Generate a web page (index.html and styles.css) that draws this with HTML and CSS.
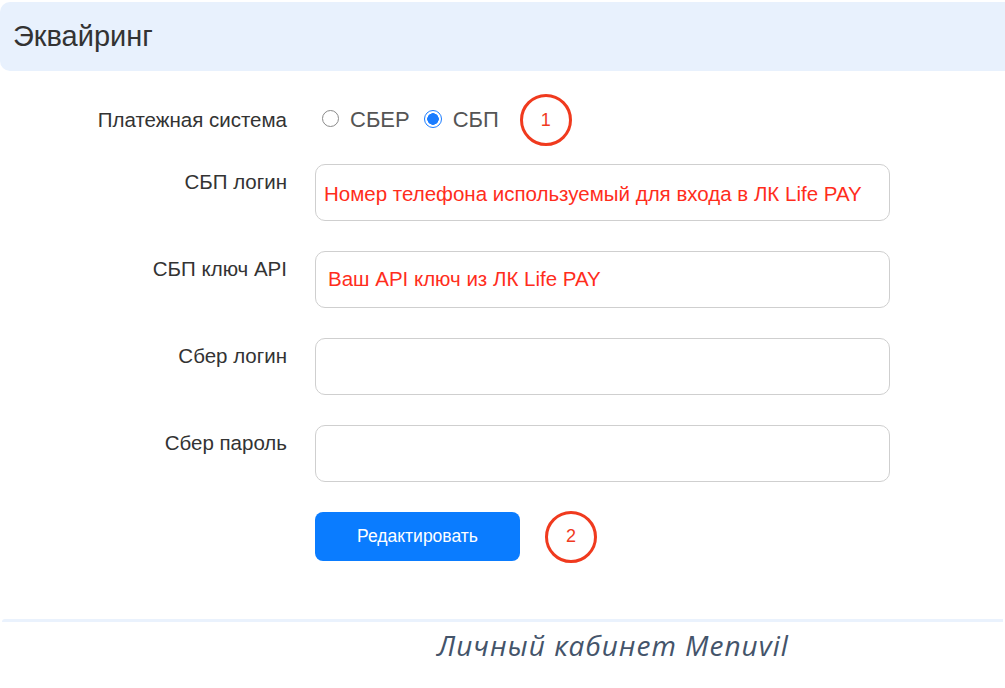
FILE: index.html
```html
<!DOCTYPE html>
<html lang="ru">
<head>
    <meta charset="UTF-8">
    <meta name="viewport" content="width=device-width, initial-scale=1.0">
    <title>Эквайринг</title>
    <link rel="stylesheet" href="styles.css">
</head>
<body>
    <header class="card-head">
        <h2>Эквайринг</h2>
    </header>
    <main class="form">
        <div class="row row-pay">
            <label class="label">Платежная система</label>
            <div class="field">
                <span class="radio"></span><span class="radio-text">СБЕР</span>
                <span class="radio checked"></span><span class="radio-text">СБП</span>
                <span class="mark mark-one">1</span>
            </div>
        </div>
        <div class="row">
            <label class="label">СБП логин</label>
            <div class="input"><span class="hint">Номер телефона используемый для входа в ЛК Life PAY</span></div>
        </div>
        <div class="row">
            <label class="label">СБП ключ API</label>
            <div class="input"><span class="hint hint-up">Ваш API ключ из ЛК Life PAY</span></div>
        </div>
        <div class="row">
            <label class="label">Сбер логин</label>
            <div class="input"></div>
        </div>
        <div class="row">
            <label class="label">Сбер пароль</label>
            <div class="input"></div>
        </div>
        <div class="row row-btn">
            <span></span>
            <div class="field">
                <button class="btn">Редактировать</button>
                <span class="mark mark-two">2</span>
            </div>
        </div>
    </main>
    <div class="next-card"></div>
    <p class="caption">Личный кабинет Menuvil</p>
</body>
</html>
```

FILE: styles.css
```css
body {
    margin: 0;
    padding: 0;
    font-family: "Liberation Sans", Arial, sans-serif;
    background: #fff;
    color: #333;
    width: 1005px;
    overflow: hidden;
}
.card-head {
    margin-top: 2px;
    height: 69px;
    background: #e8f1fd;
    border-radius: 10px 0 0 10px;
    display: flex;
    align-items: center;
    padding-left: 13px;
}
.card-head h2 {
    margin: 0;
    font-size: 29px;
    font-weight: normal;
    color: #333;
}
.form {
    padding-top: 35px;
    display: flex;
    flex-direction: column;
    gap: 30px;
}
.row {
    display: grid;
    grid-template-columns: 287px 575px;
    column-gap: 28px;
}
.label {
    text-align: right;
    font-size: 20.5px;
    line-height: 24px;
    padding-top: 6px;
    color: #333;
}
.row-pay {
    height: 28px;
    align-items: center;
}
.row-pay .label {
    padding-top: 0;
}
.field {
    display: flex;
    align-items: center;
    height: 28px;
}
.radio {
    width: 15px;
    height: 15px;
    border: 1px solid #8a8a8a;
    border-radius: 50%;
    margin: -3px 11px 0 7px;
    box-sizing: content-box;
}
.radio.checked {
    width: 16px;
    height: 16px;
    border: 1.5px solid #1a7cff;
    background: radial-gradient(circle, #1a7cff 0 5.5px, #fff 6px);
    margin-left: 10px;
}
.radio-text {
    font-size: 22px;
    color: #555;
    margin-right: 4px;
}
.mark {
    flex: none;
    width: 46px;
    height: 46px;
    border: 3px solid #f03a1e;
    border-radius: 50%;
    display: flex;
    align-items: center;
    justify-content: center;
    color: #f03a1e;
    font-size: 18px;
}
.mark-one {
    margin-left: 17px;
}
.mark-two {
    margin-left: 25px;
}
.input {
    height: 55px;
    border: 1px solid #cfcfcf;
    border-radius: 10px;
    display: flex;
    align-items: center;
    padding: 0 8px;
}
.hint {
    color: #ff2d1c;
    font-size: 20.5px;
    margin-top: 2px;
}
.hint-up {
    margin-top: -2px;
    padding-left: 4px;
}
.row-btn .field {
    height: 49px;
}
.btn {
    width: 205px;
    height: 49px;
    border: none;
    border-radius: 8px;
    background: #0a7cff;
    color: #fff;
    font-family: "Liberation Sans", Arial, sans-serif;
    font-size: 17.5px;
}
.next-card {
    margin: 58px 2px 0 2px;
    height: 3px;
    background: #eaf2fd;
    border-radius: 6px 0 0 0;
}
.caption {
    margin: 4px 0 0 437px;
    font-family: "Open Sans", Lato, sans-serif;
    font-style: italic;
    font-size: 28px;
    letter-spacing: 1px;
    color: #44546a;
}
```
